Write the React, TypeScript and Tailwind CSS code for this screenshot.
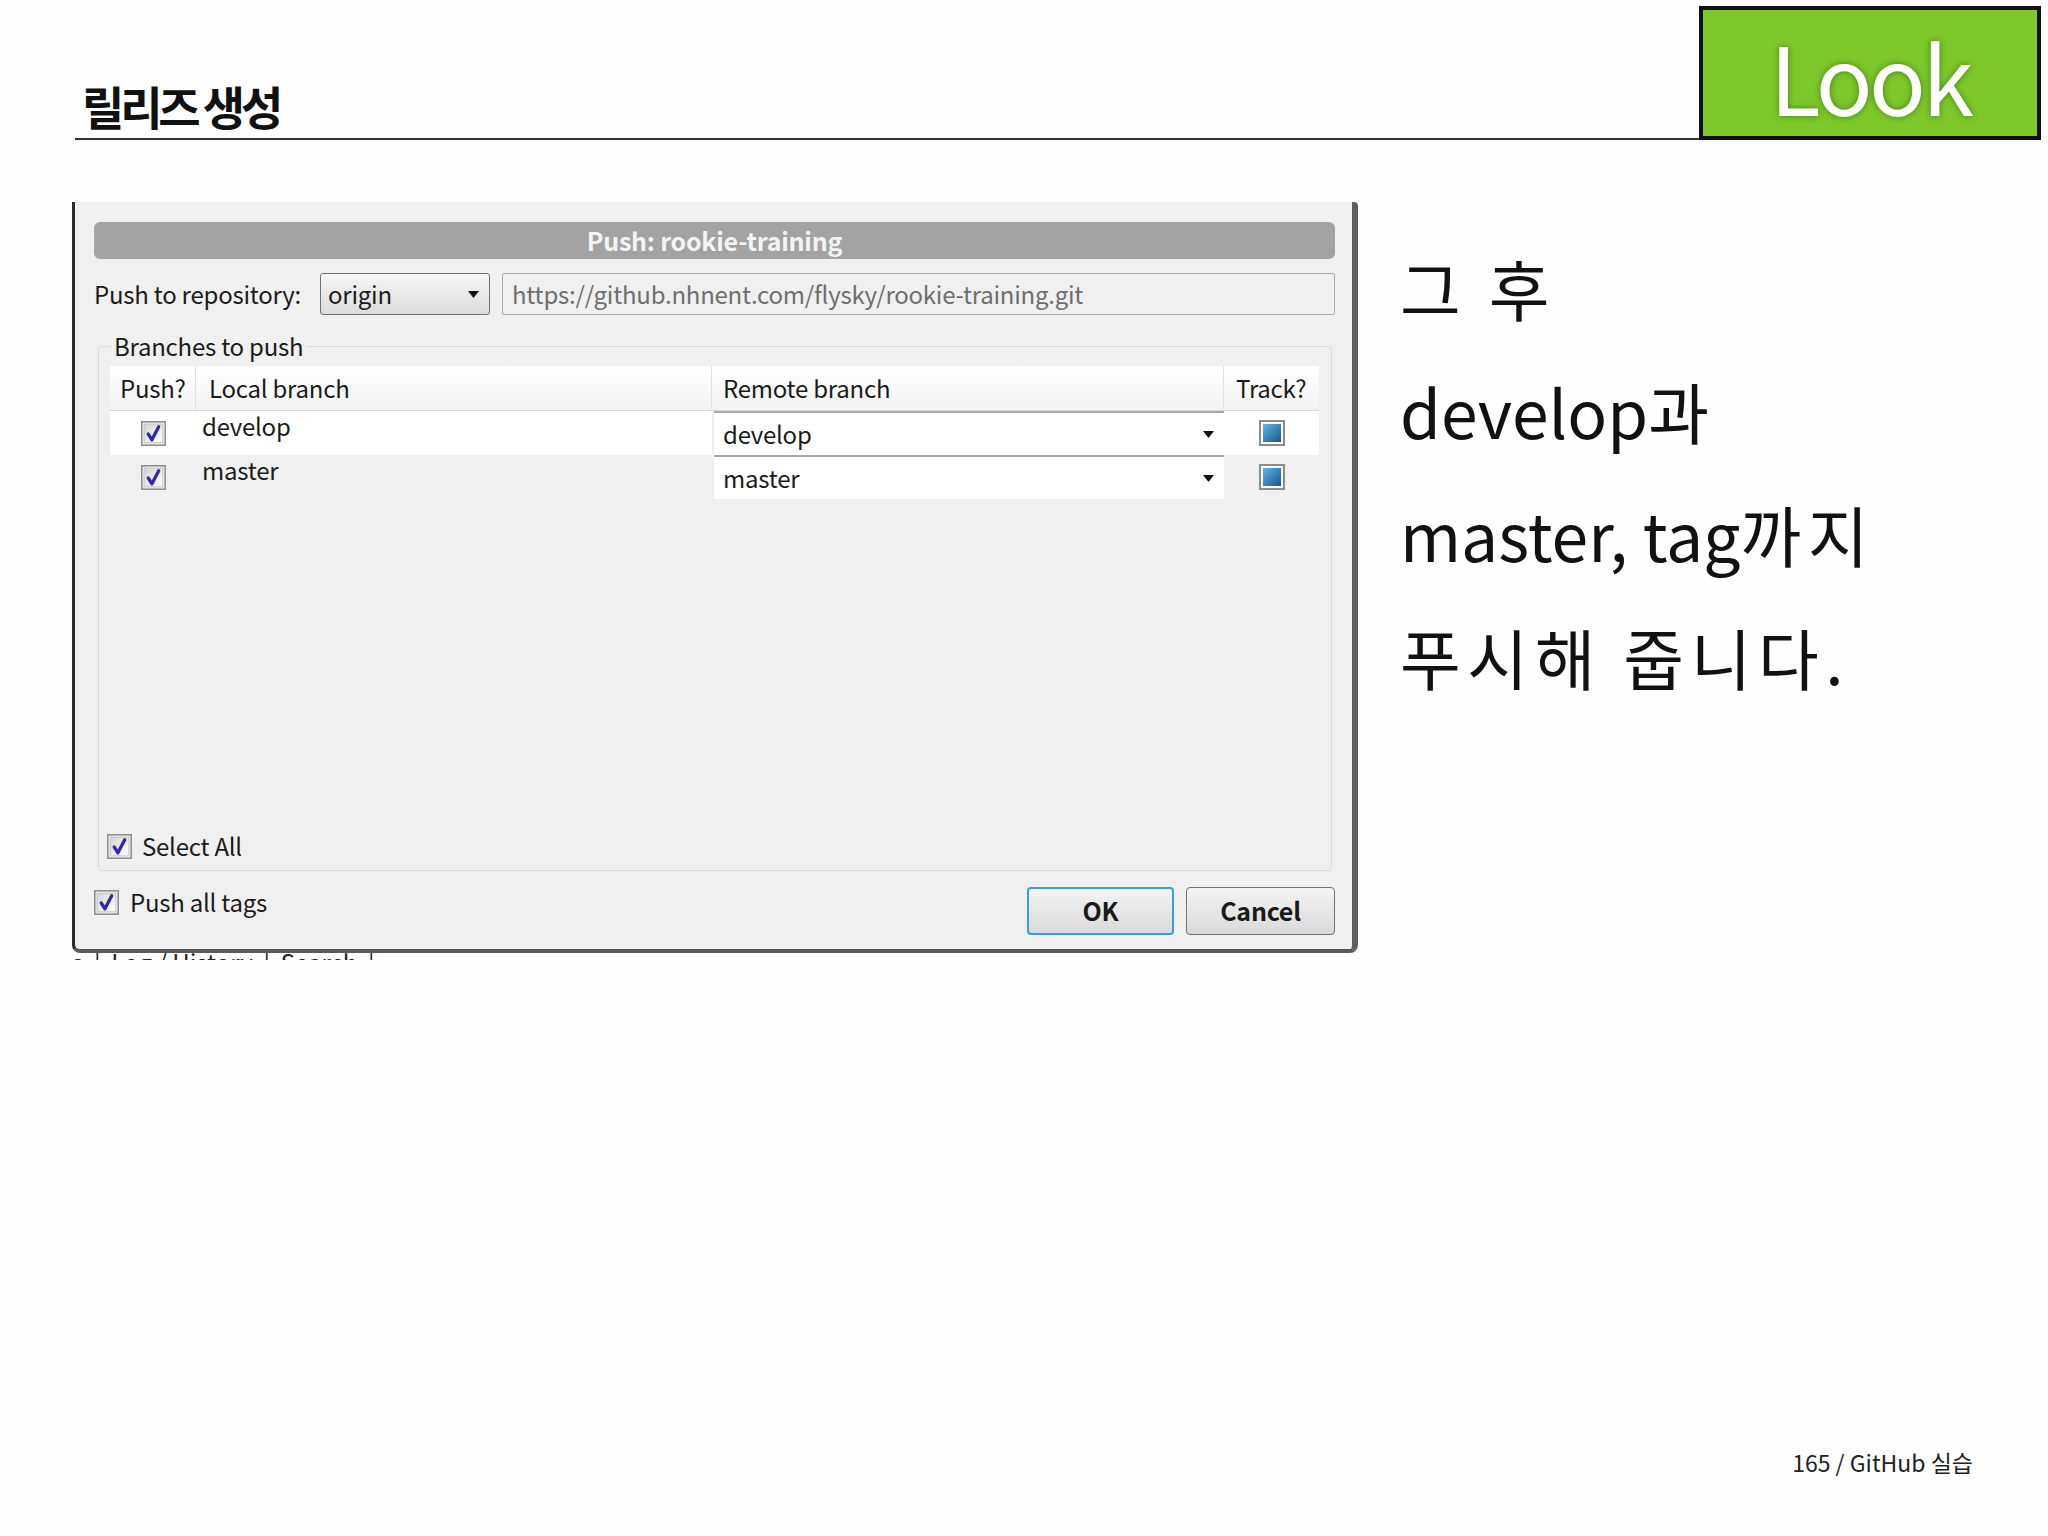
import React from 'react';

// Small checked box as drawn by the old Windows theme
const CheckBox = () => (
  <svg width="25" height="25" viewBox="0 0 24 24" className="shrink-0">
    <defs>
      <linearGradient id="cbg" x1="0" y1="0" x2="1" y2="1">
        <stop offset="0" stopColor="#d4d4d4" />
        <stop offset="1" stopColor="#ffffff" />
      </linearGradient>
    </defs>
    <rect x="0.75" y="0.75" width="22.5" height="22.5" fill="#f4f4f4" stroke="#8e8e8e" strokeWidth="1.5" />
    <rect x="3" y="3" width="18" height="18" fill="url(#cbg)" stroke="#c4c4c4" strokeWidth="1" />
    <path d="M7 12.5 L10.5 18 L17 5.5" fill="none" stroke="#3328a6" strokeWidth="3.2" strokeLinejoin="round" strokeLinecap="round" />
  </svg>
);

const TrackBox = () => (
  <div className="w-[26px] h-[26px] border-2 border-[#8c8c8c] bg-white p-[2px]">
    <div className="w-full h-full bg-linear-to-br from-[#5db7e6] to-[#14598f]" />
  </div>
);

const Arrow = () => (
  <svg width="11" height="7" viewBox="0 0 11 7">
    <path d="M0 0 H11 L5.5 7 Z" fill="#111" />
  </svg>
);

const branches = [
  { name: 'develop', white: true },
  { name: 'master', white: false },
];

const PushDialog = () => (
  <div className="w-[1286px] flex flex-col">
    <div className="h-[751px] flex flex-col bg-[#f0f0f0] border-l-[3px] border-l-[#2b2b2b] border-r-[6px] border-r-[#5f5f5f] border-b-[4px] border-b-[#5a5a5a] rounded-b-[8px] rounded-tr-[4px] pl-[19px] pr-[17px] pt-[20px] pb-[14px] text-[24px] tracking-[-0.01em] text-[#1b1b1b]">
      <div className="h-[37px] shrink-0 rounded-[6px] bg-[#a3a3a3] flex items-center justify-center text-[25px] font-semibold text-[#f4f4f4]">
        Push: rookie-training
      </div>

      <div className="h-[42px] shrink-0 mt-[14px] flex items-center whitespace-nowrap">
        <span className="w-[215px]">Push to repository:</span>
        <div className="ml-[11px] w-[170px] h-full rounded-[3px] border border-[#707070] bg-linear-to-b from-[#f6f6f6] to-[#dcdcdc] flex items-center pl-[7px] pr-[10px]">
          <span className="flex-1">origin</span>
          <Arrow />
        </div>
        <div className="ml-[12px] flex-1 h-full border border-[#a9a9a9] rounded-[2px] bg-[#f0f0f0] flex items-center pl-[9px] text-[#6e6e6e]">
          https://github.nhnent.com/flysky/rookie-training.git
        </div>
      </div>

      <fieldset className="h-[540px] shrink-0 mt-[16px] ml-[4px] mr-[3px] border border-[#d4dce2] rounded-[4px] pl-[11px] pr-[12px] pb-[11px]">
        <legend className="ml-[1px] px-[3px] leading-[30px]">Branches to push</legend>
        <div className="h-[498px] pt-[5px] flex flex-col">
          <div className="grid grid-cols-[86px_516px_512px_95px]">
            <div className="h-[45px] flex items-center pl-[10px] bg-linear-to-b from-white to-[#f3f3f3] border-r border-[#e2e2e2] border-b border-b-[#d6d6d6]">Push?</div>
            <div className="h-[45px] flex items-center pl-[13px] bg-linear-to-b from-white to-[#f3f3f3] border-r border-[#e2e2e2] border-b border-b-[#d6d6d6]">Local branch</div>
            <div className="h-[45px] flex items-center pl-[11px] bg-linear-to-b from-white to-[#f3f3f3] border-r border-[#e2e2e2] border-b border-b-[#d6d6d6]">Remote branch</div>
            <div className="h-[45px] flex items-center pl-[12px] bg-linear-to-b from-white to-[#f3f3f3] border-b border-b-[#d6d6d6]">Track?</div>
            {branches.map(b => (
              <React.Fragment key={b.name}>
                <div className={`h-[44px] flex items-center justify-center ${b.white ? 'bg-white' : ''}`}>
                  <CheckBox />
                </div>
                <div className={`h-[44px] flex items-center pl-[6px] pb-[14px] ${b.white ? 'bg-white' : ''}`}>{b.name}</div>
                <div className="h-[44px] flex items-center pl-[9px] pr-[10px] bg-white border-t-2 border-[#a9a9a9] ml-[2px]">
                  <span className="flex-1">{b.name}</span>
                  <Arrow />
                </div>
                <div className={`h-[44px] flex items-center justify-center ${b.white ? 'bg-white' : ''}`}>
                  <TrackBox />
                </div>
              </React.Fragment>
            ))}
          </div>
          <div className="flex-1" />
          <div className="h-[26px] flex items-center -ml-[3px] gap-[10px]">
            <CheckBox />
            <span>Select All</span>
          </div>
        </div>
      </fieldset>

      <div className="h-[48px] shrink-0 mt-[16px] flex items-start">
        <div className="h-[30px] flex items-center gap-[11px] flex-1">
          <CheckBox />
          <span>Push all tags</span>
        </div>
        <button className="w-[147px] h-[48px] rounded-[4px] border-2 border-[#3b9fd3] bg-linear-to-b from-[#f4f4f4] to-[#dadada] font-bold text-[25px] text-[#1a1a1a]">
          OK
        </button>
        <button className="ml-[12px] w-[149px] h-[48px] rounded-[4px] border border-[#737373] bg-linear-to-b from-[#f4f4f4] to-[#dadada] font-bold text-[25px] text-[#1a1a1a]">
          Cancel
        </button>
      </div>
    </div>
    <div className="h-[7px] overflow-hidden bg-white">
      <div className="text-[24px] leading-[24px] -mt-[3px] text-[#222] whitespace-pre">{'s  |  Log / History  |  Search  |'}</div>
    </div>
  </div>
);

// Hangul in the slide font runs a little wider than Noto's
const Ko = ({ children }: { children: React.ReactNode }) => (
  <span className="tracking-[0.1em]">{children}</span>
);

export default function App() {
  return (
    <div className="w-[2048px] h-[1536px] bg-[#fefefe] flex flex-col font-['Noto_Sans_CJK_KR','Noto_Sans',sans-serif] text-[#111]">
      <div className="flex items-end pl-[75px] pr-[7px] pt-[6px]">
        <div className="flex-1 border-b-2 border-[#333] pl-[7px] pb-[10px]">
          <h1 className="text-[46px] leading-none font-bold tracking-[-0.09em] text-[#111]">릴리즈 생성</h1>
        </div>
        <div className="w-[342px] h-[134px] border-[4px] border-[#111] bg-[#7dc82a] flex items-center justify-center pt-[4px]">
          <span className="text-white text-[94px] leading-none tracking-[-0.04em] [text-shadow:0_0_6px_rgba(20,70,0,0.55)]">Look</span>
        </div>
      </div>

      <div className="mt-[62px] flex pl-[72px]">
        <PushDialog />
        <div className="ml-[42px] pt-[24px] text-[66px] leading-[123px] text-[#111] whitespace-nowrap">
          <p><Ko>그 후</Ko></p>
          <p>develop<Ko>과</Ko></p>
          <p>master, tag<Ko>까지</Ko></p>
          <p><Ko>푸시해 줍니다.</Ko></p>
        </div>
      </div>

      <div className="mt-auto pr-[75px] pb-[59px] flex justify-end">
        <span className="text-[23px] leading-[30px] text-[#222]">165 / GitHub 실습</span>
      </div>
    </div>
  );
}
